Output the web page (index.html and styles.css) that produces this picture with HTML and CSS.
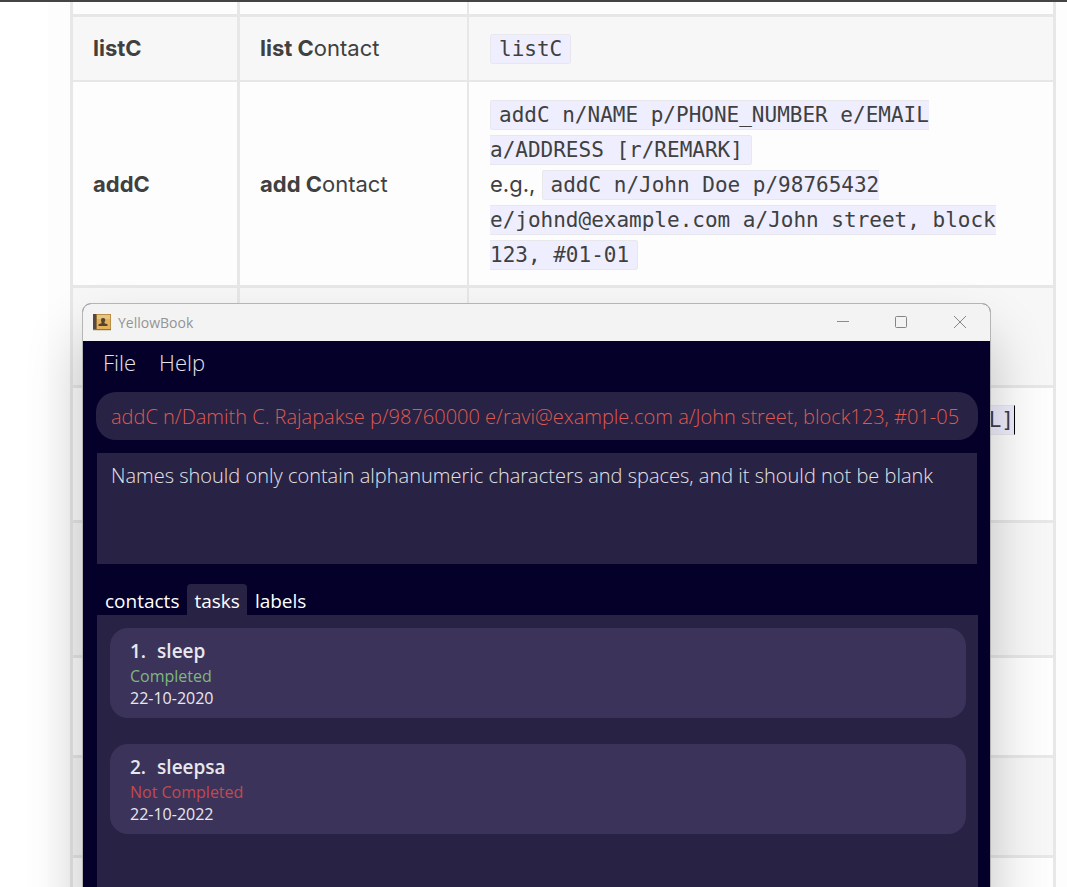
FILE: index.html
```
<!DOCTYPE html>
<html lang="en">
<head>
<meta charset="utf-8">
<title>YellowBook</title>
<link rel="stylesheet" href="styles.css">
</head>
<body>
<div class="guide">
  <table class="commands">
    <colgroup><col class="col-command"><col class="col-meaning"><col></colgroup>
    <tbody>
      <tr class="row-partial"><td></td><td></td><td></td></tr>
      <tr class="shaded"><td><b>listC</b></td><td><b>list C</b>ontact</td><td><code>listC</code></td></tr>
      <tr class="thin"><td><b>addC</b></td><td><b>add C</b>ontact</td><td><div><code>addC n/NAME p/PHONE_NUMBER e/EMAIL a/ADDRESS [r/REMARK]</code></div><div>e.g., <code>addC n/John Doe p/98765432 e/johnd@example.com a/John street, block 123, #01-01</code></div></td></tr>
      <tr class="shaded row-two"><td></td><td></td><td></td></tr>
      <tr class="row-three"><td></td><td></td><td class="tail"><code class="caret">L]</code></td></tr>
      <tr class="shaded row-three"><td></td><td></td><td></td></tr>
      <tr class="row-two"><td></td><td></td><td></td></tr>
      <tr class="shaded row-two"><td></td><td></td><td></td></tr>
      <tr class="row-two"><td></td><td></td><td></td></tr>
    </tbody>
  </table>
</div>

<main class="window">
  <header class="titlebar">
    <svg class="app-icon" width="18" height="17" viewBox="0 0 18 17" aria-hidden="true">
      <rect x="0" y="0" width="18" height="17" fill="#b98f48"/>
      <rect x="4" y="1" width="13" height="14" fill="#e3b35c"/>
      <rect x="4" y="1" width="13" height="4" fill="#e9c47c"/>
      <rect x="0" y="0" width="3" height="16" fill="#544744"/>
      <rect x="3" y="0" width="1" height="16" fill="#96703a"/>
      <rect x="0" y="15" width="18" height="1" fill="#967039"/>
      <rect x="0" y="16" width="18" height="1" fill="#ddd6cb"/>
      <path d="M10.300 4a2 2 0 0 1 2 2c0 1-.6 1.700-.8 2.300v1l3 1V12h-9v-1.700l3-1v-1C8.300 7.700 8 7 8 6a2 2 0 0 1 2.300-2z" fill="#554330"/>
    </svg>
    <h1 class="title">YellowBook</h1>
    <button class="control" aria-label="Minimize"><svg width="14" height="14" viewBox="0 0 14 14"><path d="M1 5.500h12" stroke="#8c8c8c" fill="none"/></svg></button>
    <button class="control" aria-label="Maximize"><svg width="14" height="14" viewBox="0 0 14 14"><rect x="1.500" y=".5" width="11" height="11" rx="1" stroke="#858585" fill="none"/></svg></button>
    <button class="control" aria-label="Close"><svg width="14" height="14" viewBox="0 0 14 14"><path d="M1 0l12 12M13 0L1 12" stroke="#858585" fill="none"/></svg></button>
  </header>
  <nav class="menubar"><button>File</button><button>Help</button></nav>
  <div class="body">
    <input class="command" type="text" aria-label="Command" value="addC n/Damith C. Rajapakse p/98760000 e/ravi@example.com a/John street, block123, #01-05">
    <textarea class="result" readonly aria-label="Result">Names should only contain alphanumeric characters and spaces, and it should not be blank</textarea>
    <div class="tabs" role="tablist">
      <button role="tab">contacts</button><button role="tab" class="selected" aria-selected="true">tasks</button><button role="tab">labels</button>
    </div>
    <section class="list">
      <article class="task">
        <h2><span>1.</span><span>sleep</span></h2>
        <p class="done">Completed</p>
        <p>22-10-2020</p>
      </article>
      <article class="task">
        <h2><span>2.</span><span>sleepsa</span></h2>
        <p class="pending">Not Completed</p>
        <p>22-10-2022</p>
      </article>
    </section>
  </div>
</main>
</body>
</html>
```
FILE: styles.css
```
* { box-sizing: border-box; }

html, body { height: 100%; }

body {
  margin: 0;
  position: relative;
  overflow: hidden;
  border-top: 2px solid #454345;
  background: #fff;
  color: #404040;
  font-family: "Open Sans", "Noto Sans", sans-serif;
}

.guide {
  height: 100%;
  overflow: hidden;
  margin-left: 48px;
  padding: 0 11px 0 22px;
  background: #fdfdfd;
}

.commands {
  width: 100%;
  table-layout: fixed;
  border-spacing: 0;
  border-right: 3px solid #e7e7e7;
  font: 22px/35px Inter, "Liberation Sans", sans-serif;
}

.col-command { width: 167px; }
.col-meaning { width: 230px; }

.commands td {
  height: 66px;
  padding: 14px 20px;
  border-top: 3px solid #e7e7e7;
  border-left: 3px solid #e7e7e7;
  vertical-align: middle;
}

.commands td:last-child { padding-left: 21px; border-left-width: 2px; }
.commands td b { font-weight: 700; }
.commands .shaded td { background: #f7f7f7; }
.commands td:empty { padding: 0; }
.commands .row-partial td { height: 12px; border-top: 0; }
.commands .thin td { padding-top: 15px; padding-bottom: 13px; border-top-width: 2px; }
.commands .row-two td { height: 100px; }
.commands .row-three td { height: 135px; }
.commands td.tail { padding-right: 38px; text-align: right; vertical-align: top; }

code {
  padding: 2px 8px;
  border: 1px solid #e8e8ec;
  border-radius: 3px;
  background: #eef;
  color: #404040;
  font: 21px/24px "DejaVu Sans Mono", monospace;
}

.caret { padding-right: 0; border-right: 1px solid #000; border-radius: 0; }

.window {
  position: absolute;
  top: 301px;
  right: 76px;
  bottom: -20px;
  left: 82px;
  display: flex;
  flex-direction: column;
  overflow: hidden;
  border: 1px solid #b5b5b5;
  border-radius: 9px;
  background: #040029;
  box-shadow: 0 34px 56px rgba(0, 0, 0, .23);
}

button { border: 0; background: none; font-family: inherit; }

.titlebar {
  flex: none;
  display: flex;
  align-items: center;
  height: 37px;
  padding-left: 10px;
  background: #f3f3f3;
}

.title { flex: 1; margin: 0 0 0 7px; color: #949494; font-size: 14px; font-weight: 400; }

.control { display: flex; justify-content: center; width: 58px; padding: 0; }
.control:last-child { width: 60px; }

.menubar { flex: none; display: flex; gap: 23px; height: 51px; padding: 3px 20px 0; }
.menubar button { align-self: flex-start; padding: 0; color: #e6e5ea; font-size: 22px; font-weight: 300; line-height: 36px; }

.body { flex: 1; display: flex; flex-direction: column; padding: 0 12px 0 13px; }

.command, .result {
  border: 0;
  outline: 0;
  background: #282244;
  font-family: inherit;
  font-size: 20px;
  font-weight: 300;
}

.command { height: 48px; padding: 0; border: solid #282244; border-width: 0 12px 0 15px; border-radius: 20px; color: #de5a50; }

.result { height: 111px; margin: 13px 1px 20px; padding: 8px 14px; resize: none; color: #e3e2e6; line-height: 30px; }

.tabs { display: flex; gap: 1px; padding-left: 2px; }
.tabs button { height: 31px; padding: 2px 7px 0; border-radius: 4px 4px 0 0; color: #fff; font-size: 19px; line-height: 28px; }
.tabs .selected { background: #282244; }

.list {
  flex: 1;
  display: flex;
  flex-direction: column;
  gap: 26px;
  margin-left: 1px;
  padding: 13px 12px 12px 13px;
  background: #282244;
}

.task { padding: 9px 20px; border-radius: 18px; background: #3c335b; color: #e8e7ec; }
.task h2 { display: flex; gap: 11px; margin: 0; font-size: 19px; font-weight: 600; line-height: 28px; }
.task p { margin: 0; font-size: 16px; line-height: 22px; }
.task .done { color: #7fb77e; }
.task .pending { color: #c24a4d; }
```
